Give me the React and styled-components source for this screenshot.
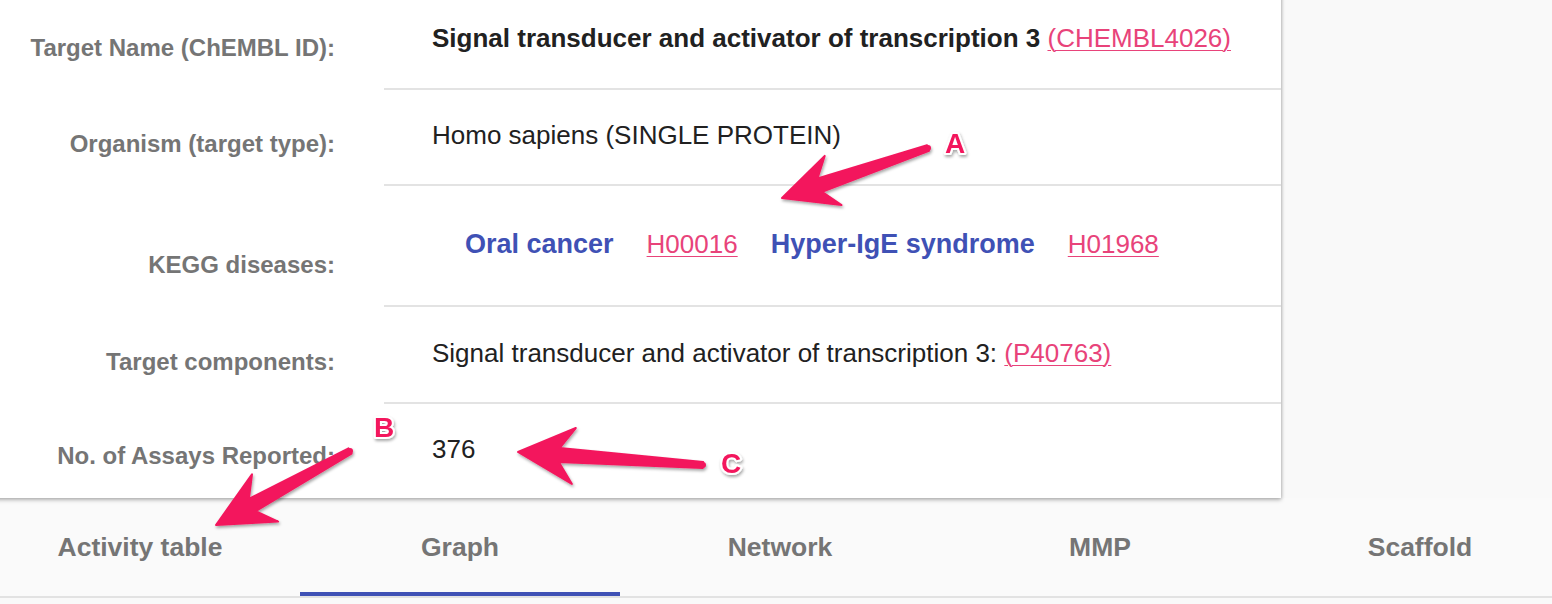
import React from 'react'
import styled, { createGlobalStyle } from 'styled-components'

const GlobalStyle = createGlobalStyle`
  html, body {
    margin: 0;
    padding: 0;
    background: #f9f9f9;
    overflow: hidden;
  }
  body {
    font-family: 'Liberation Sans', Arial, Helvetica, sans-serif;
  }
`

const colors = {
  label: '#757575',
  text: '#212121',
  link: '#e8437a',
  blue: '#3f51b5',
  divider: '#e3e3e3',
  marker: '#f3175d',
}

const Page = styled.div`
  position: relative;
  width: 1552px;
  height: 604px;
  overflow: hidden;
  background: #f9f9f9;
`

// the page is scrolled a little: the sheet starts above and left of the window
const Sheet = styled.div`
  margin: -8px 0 0 -20px;
  width: 1600px;
`

const Card = styled.section`
  position: relative;
  z-index: 1;
  width: 1301px;
  background: #fff;
  box-shadow: 0 2px 4px rgba(0, 0, 0, 0.28), 1px 0 3px rgba(0, 0, 0, 0.12);
  display: grid;
  grid-template-columns: 404px 1fr;
`

const Label = styled.div`
  align-self: end;
  text-align: right;
  padding: 0 49px 28px 0;
  font-weight: bold;
  font-size: 24px;
  line-height: 28px;
  color: ${colors.label};
  white-space: nowrap;
`

const Value = styled.div`
  box-sizing: border-box;
  height: ${p => p.$h}px;
  display: flex;
  align-items: center;
  padding: 0 0 3px 48px;
  border-bottom: ${p => (p.$last ? 'none' : `2px solid ${colors.divider}`)};
  font-size: 26px;
  line-height: 31px;
  color: ${colors.text};
  font-weight: ${p => (p.$bold ? 'bold' : 'normal')};
  white-space: nowrap;
`

const Link = styled.a`
  color: ${colors.link};
  font-weight: normal;
  text-decoration: underline;
  text-decoration-thickness: 1px;
  text-underline-offset: 3px;
  cursor: pointer;
`

const DiseaseList = styled.div`
  display: flex;
  align-items: center;
  gap: 33px;
  padding-left: 33px;
`

const Disease = styled.span`
  color: ${colors.blue};
  font-weight: bold;
  font-size: 27px;
`

const TabBar = styled.nav`
  display: grid;
  grid-template-columns: repeat(5, 320px);
  height: 100px;
  box-sizing: border-box;
  border-bottom: 2px solid #e2e2e2;
  background: #fafafa;
`

const Tab = styled.div`
  display: flex;
  align-items: center;
  justify-content: center;
  padding-top: 4px;
  border-bottom: 4px solid ${p => (p.$active ? colors.blue : 'transparent')};
  font-weight: bold;
  font-size: 26.5px;
  color: ${colors.label};
  cursor: pointer;
`

const Overlay = styled.svg`
  position: absolute;
  left: 0;
  top: 0;
  z-index: 2;
  pointer-events: none;
`

const MarkerLetter = styled.text`
  font-family: 'Liberation Sans', Arial, sans-serif;
  font-weight: bold;
  font-size: 28px;
  fill: ${colors.marker};
  stroke: #fff;
  stroke-width: 4px;
  stroke-linejoin: round;
  paint-order: stroke;
`

// skitch style arrow: tapered shaft, swept-back head
function arrowPoints({ tail, tip, head, half, neck, end }) {
  const dx = tip[0] - tail[0]
  const dy = tip[1] - tail[1]
  const len = Math.hypot(dx, dy)
  const ux = dx / len
  const uy = dy / len
  const nx = -uy
  const ny = ux
  const at = (back, side) => [
    tip[0] - ux * back + nx * side,
    tip[1] - uy * back + ny * side,
  ]
  const tailAt = side => [tail[0] + nx * side, tail[1] + ny * side]
  const pts = [
    tip,
    at(head, half),
    at(head * 0.74, neck),
    tailAt(end),
    tailAt(-end),
    at(head * 0.74, -neck),
    at(head, -half),
  ]
  return pts.map(p => p.map(v => v.toFixed(1)).join(',')).join(' ')
}

const arrows = [
  { tail: [928, 148], tip: [782, 198], head: 54, half: 26, neck: 7, end: 3 },
  { tail: [350, 451], tip: [216, 525], head: 56, half: 27, neck: 7, end: 3 },
  { tail: [703, 465], tip: [518, 452], head: 56, half: 28, neck: 7, end: 3 },
]

const letters = [
  { ch: 'A', x: 955, y: 153 },
  { ch: 'B', x: 384, y: 437 },
  { ch: 'C', x: 731, y: 473 },
]

const rows = [
  {
    label: 'Target Name (ChEMBL ID):',
    h: 98,
    bold: true,
    content: (
      <>
        Signal transducer and activator of transcription 3&nbsp;
        <Link>(CHEMBL4026)</Link>
      </>
    ),
  },
  { label: 'Organism (target type):', h: 96, content: 'Homo sapiens (SINGLE PROTEIN)' },
  {
    label: 'KEGG diseases:',
    h: 121,
    content: (
      <DiseaseList>
        <Disease>Oral cancer</Disease>
        <Link>H00016</Link>
        <Disease>Hyper-IgE syndrome</Disease>
        <Link>H01968</Link>
      </DiseaseList>
    ),
  },
  {
    label: 'Target components:',
    h: 97,
    content: (
      <>
        Signal transducer and activator of transcription 3:&nbsp;
        <Link>(P40763)</Link>
      </>
    ),
  },
  { label: 'No. of Assays Reported:', h: 94, content: '376' },
]

const tabs = ['Activity table', 'Graph', 'Network', 'MMP', 'Scaffold']

export default function App() {
  return (
    <Page>
      <GlobalStyle />
      <Sheet>
        <Card>
          {rows.map((row, i) => (
            <React.Fragment key={row.label}>
              <Label>{row.label}</Label>
              <Value $h={row.h} $bold={row.bold} $last={i === rows.length - 1}>
                {row.content}
              </Value>
            </React.Fragment>
          ))}
        </Card>
        <TabBar>
          {tabs.map(t => (
            <Tab key={t} $active={t === 'Graph'}>
              {t}
            </Tab>
          ))}
        </TabBar>
      </Sheet>
      <Overlay width="1552" height="604" viewBox="0 0 1552 604">
        <defs>
          <filter id="drop" x="-20%" y="-20%" width="140%" height="140%">
            <feDropShadow dx="1" dy="2" stdDeviation="1.6" floodOpacity="0.35" />
          </filter>
        </defs>
        <g filter="url(#drop)">
          {arrows.map((a, i) => (
            <g key={i} fill={colors.marker}>
              <polygon points={arrowPoints(a)} strokeLinejoin="round" stroke={colors.marker} strokeWidth="2" />
              <circle cx={a.tail[0]} cy={a.tail[1]} r={a.end} />
            </g>
          ))}
          {letters.map(l => (
            <MarkerLetter key={l.ch} x={l.x} y={l.y} textAnchor="middle">
              {l.ch}
            </MarkerLetter>
          ))}
        </g>
      </Overlay>
    </Page>
  )
}
